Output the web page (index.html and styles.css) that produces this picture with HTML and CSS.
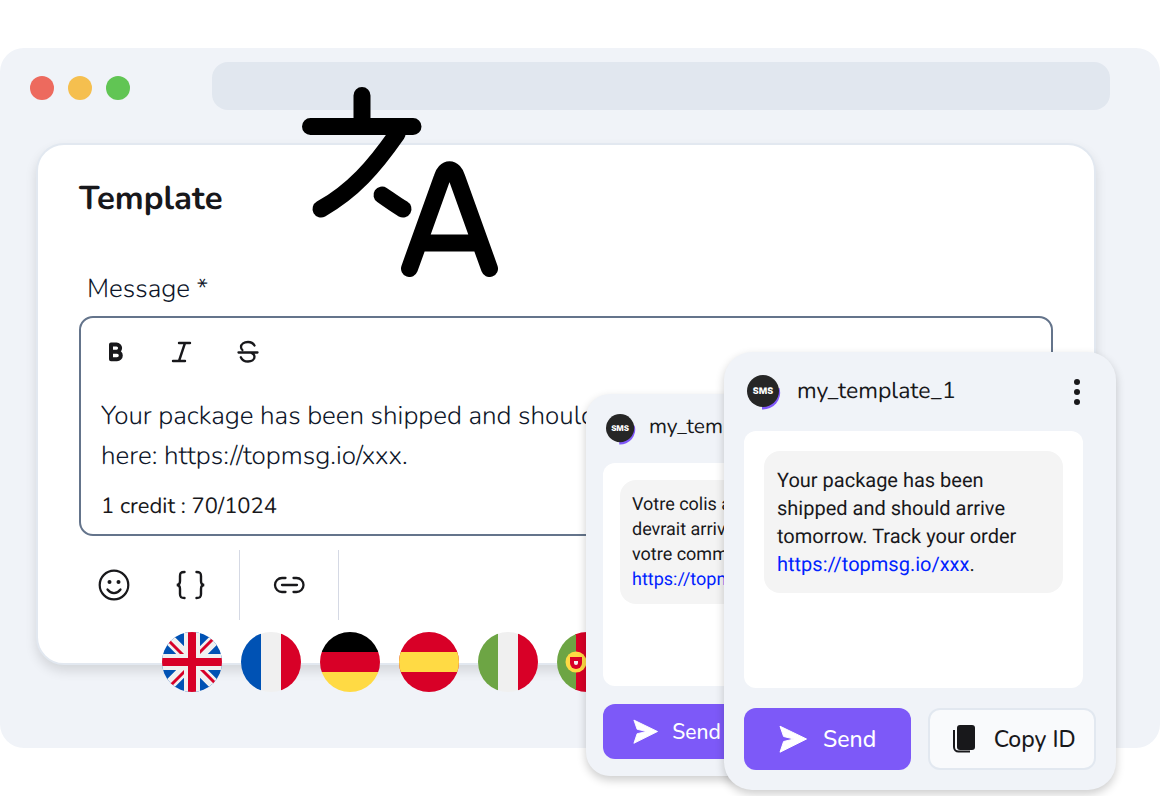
FILE: index.html
```html
<!DOCTYPE html>
<html lang="en">
<head>
<meta charset="UTF-8">
<meta name="viewport" content="width=device-width, initial-scale=1.0">
<title>Template</title>
<link rel="stylesheet" href="styles.css">
</head>
<body>

<main class="scene">
    <div class="window">
        <header class="window-bar">
            <span class="dot red"></span>
            <span class="dot yellow"></span>
            <span class="dot green"></span>
            <div class="address"></div>
        </header>

        <section class="panel">
            <h1>Template</h1>
            <label for="message">Message&nbsp;*</label>
            <div class="editor">
                <div class="format">
                    <button type="button" aria-label="Bold">
                        <svg viewBox="0 0 24 24" width="24" height="24"><path d="M7 4.500H12.500a3.400 3.400 0 0 1 0 7.200H7zM7 11.700h6a3.700 3.700 0 0 1 0 7.600H7z" fill="none" stroke="#18181b" stroke-width="4" stroke-linejoin="round"/></svg>
                    </button>
                    <button type="button" aria-label="Italic">
                        <svg viewBox="0 0 24 24" width="24" height="24"><path d="M9 3h11M3 21H15M15 3L9 21" fill="none" stroke="#18181b" stroke-width="2.400" stroke-linecap="round"/></svg>
                    </button>
                    <button type="button" aria-label="Strikethrough">
                        <svg viewBox="0 0 24 24" width="24" height="24"><path d="M18.500 5.500C17 2.800 14.500 2 12 2C8 2 5 4 5 7c0 1.300.5 2.200 1.400 3M2.500 12.500h19M15.500 13c2 .8 3 2 3 3.800 0 3-3 4.700-6.500 4.700-3.300 0-6-1.500-7.200-4.300" fill="none" stroke="#18181b" stroke-width="2.300" stroke-linecap="round"/></svg>
                    </button>
                </div>
                <textarea id="message" rows="2">Your package has been shipped and should arrive tomorrow. Track your order here: https://topmsg.io/xxx.</textarea>
                <p class="credits">1 credit : 70/1024</p>
            </div>
            <div class="tools">
                <button type="button" aria-label="Emoji">
                    <svg viewBox="0 0 32 32" width="32" height="32"><circle cx="16" cy="16" r="14.300" fill="none" stroke="#18181b" stroke-width="2.200"/><circle cx="11.500" cy="13" r="2" fill="#18181b"/><circle cx="20.500" cy="13" r="2" fill="#18181b"/><path d="M9.500 20.500c3.500 4.700 9.500 4.700 13 0" fill="none" stroke="#18181b" stroke-width="2.200" stroke-linecap="round"/></svg>
                </button>
                <button type="button" aria-label="Variable">
                    <svg viewBox="0 0 32 32" width="32" height="32"><path d="M10.500 3C6.500 3 6 4.500 6 7v5c0 2.500-1 4-3.300 4 2.300 0 3.300 1.500 3.300 4v5c0 2.500.5 4 4.500 4M22.500 3c4 0 4.500 1.500 4.500 4v5c0 2.500 1 4 3.300 4-2.300 0-3.300 1.500-3.300 4v5c0 2.500-.5 4-4.500 4" fill="none" stroke="#18181b" stroke-width="2.400" stroke-linecap="round"/></svg>
                </button>
                <span class="divider"></span>
                <button type="button" aria-label="Link">
                    <svg viewBox="0 0 32 32" width="32" height="32"><path d="M12.500 9H9a7 7 0 0 0 0 14H12.500M20.500 9h3a7 7 0 0 1 0 14H20.500M9 16h15" fill="none" stroke="#18181b" stroke-width="2.300" stroke-linecap="round"/></svg>
                </button>
                <span class="divider"></span>
            </div>
        </section>

        <div class="flags">
            <svg class="flag" viewBox="0 0 60 60" role="img" aria-label="English">
                <rect width="60" height="60" fill="#0052b4"/>
                <path d="M0 0L60 60M60 0L0 60" stroke="#f0f0f0" stroke-width="11"/>
                <path d="M5 7L23 25M55 53L37 35M53 5L36 22M7 55L24 38" stroke="#d80027" stroke-width="3"/>
                <path d="M30 0V60M0 30H60" stroke="#f0f0f0" stroke-width="16"/>
                <path d="M30 0V60M0 30H60" stroke="#d80027" stroke-width="8"/>
            </svg>
            <svg class="flag" viewBox="0 0 60 60" role="img" aria-label="French">
                <rect width="60" height="60" fill="#f0f0f0"/>
                <rect width="20" height="60" fill="#0052b4"/>
                <rect x="40" width="20" height="60" fill="#d80027"/>
            </svg>
            <svg class="flag" viewBox="0 0 60 60" role="img" aria-label="German">
                <rect width="60" height="20" fill="#000"/>
                <rect y="20" width="60" height="20" fill="#d80027"/>
                <rect y="40" width="60" height="20" fill="#ffda44"/>
            </svg>
            <svg class="flag" viewBox="0 0 60 60" role="img" aria-label="Spanish">
                <rect width="60" height="60" fill="#d80027"/>
                <rect y="20" width="60" height="20" fill="#ffda44"/>
            </svg>
            <svg class="flag" viewBox="0 0 60 60" role="img" aria-label="Italian">
                <rect width="60" height="60" fill="#f0f0f0"/>
                <rect width="20" height="60" fill="#6da544"/>
                <rect x="40" width="20" height="60" fill="#d80027"/>
            </svg>
            <svg class="flag" viewBox="0 0 60 60" role="img" aria-label="Portuguese">
                <rect x="18" width="42" height="60" fill="#d80027"/>
                <rect width="19" height="60" fill="#6da544"/>
                <circle cx="19" cy="30" r="10.500" fill="#ffda44"/>
                <path d="M13 25h12v6a6 6 0 0 1-12 0z" fill="#d80027"/>
                <path d="M17 29h4v2a2 2 0 0 1-4 0z" fill="#f0f0f0"/>
            </svg>
        </div>
    </div>

    <svg class="translate" viewBox="0 0 196 190" width="196" height="190" aria-hidden="true">
        <g fill="none" stroke="#000" stroke-width="17" stroke-linecap="round" stroke-linejoin="round">
            <path d="M60 8.500V39M8.500 39.500H111M95 47C72 80 51 104 19 122M80 108C86 112 94 118 101 122"/>
            <path d="M107.500 181.500L140 91C143 80 152 80 155 91L187.500 181.500M118 156H177"/>
        </g>
    </svg>

    <article class="card small">
        <div class="card-head">
            <svg class="sms" viewBox="0 0 34 36" aria-hidden="true"><path d="M15 18V35.500A17 17 0 0 0 32.500 14z" fill="#8059fa"/><circle cx="16" cy="17" r="16" fill="#262626"/><text x="16" y="20">SMS</text></svg>
            <h2>my_template_2</h2>
        </div>
        <div class="preview">
            <p class="bubble">Votre colis a été expédié et<br>devrait arriver demain. Suivez<br>votre commande ici :<br><a href="#">https://topmsg.io/xxx</a>.</p>
        </div>
        <div class="actions">
            <button type="button" class="send">
                <svg viewBox="0 0 28 28" aria-hidden="true"><path d="M1 1.200L27.500 14L1 27.200L4.600 16.500L15 14L4.600 11.500z" fill="#fff" stroke="#fff" stroke-linejoin="round"/></svg>
                Send
            </button>
        </div>
    </article>

    <article class="card">
        <div class="card-head">
            <svg class="sms" viewBox="0 0 34 36" aria-hidden="true"><path d="M15 18V35.500A17 17 0 0 0 32.500 14z" fill="#8059fa"/><circle cx="16" cy="17" r="16" fill="#262626"/><text x="16" y="20">SMS</text></svg>
            <h2>my_template_1</h2>
            <button type="button" class="more" aria-label="More">
                <svg viewBox="0 0 8 28" width="8" height="28"><circle cx="4" cy="4" r="3"/><circle cx="4" cy="14" r="3"/><circle cx="4" cy="24" r="3"/></svg>
            </button>
        </div>
        <div class="preview">
            <p class="bubble">Your package has been shipped and should arrive tomorrow. Track your order <a href="#">https://topmsg.io/xxx</a>.</p>
        </div>
        <div class="actions">
            <button type="button" class="send">
                <svg viewBox="0 0 28 28" aria-hidden="true"><path d="M1 1.200L27.500 14L1 27.200L4.600 16.500L15 14L4.600 11.500z" fill="#fff" stroke="#fff" stroke-linejoin="round"/></svg>
                Send
            </button>
            <button type="button" class="copy">
                <svg viewBox="0 0 24 28" aria-hidden="true"><rect x="5" y="0" width="18" height="25" rx="3" fill="#18181b"/><path d="M2 5V22a4.500 4.500 0 0 0 4.500 4.500H18" fill="none" stroke="#18181b" stroke-width="2"/></svg>
                Copy ID
            </button>
        </div>
    </article>
</main>

</body>
</html>
```
FILE: styles.css
```css
* {
    box-sizing: border-box;
}
body {
    margin: 0;
    background: #fff;
    color: #18181b;
    font-family: Nunito, Lato, sans-serif;
    text-rendering: geometricPrecision;
}
h1, h2, p {
    margin: 0;
}
button {
    padding: 0;
    border: 0;
    background: none;
    color: inherit;
    font: inherit;
    cursor: pointer;
}
svg {
    display: block;
}
.scene {
    position: relative;
    padding: 48px 0;
}
.window {
    padding: 14px 0 56px;
    border-radius: 24px;
    background: #f0f3f8;
}

/* browser bar */
.window-bar {
    display: flex;
    align-items: center;
    gap: 14px;
    padding: 0 50px 0 30px;
}
.dot {
    width: 24px;
    height: 24px;
    margin-top: 4px;
    border-radius: 50%;
}
.red {
    background: #ed6a5e;
}
.yellow {
    background: #f5bf4f;
}
.green {
    background: #61c554;
}
.address {
    flex: 1;
    height: 48px;
    margin-left: 68px;
    border-radius: 16px;
    background: #e1e7ef;
}

/* template form */
.panel {
    margin: 33px 64px 0 36px;
    padding: 34px 41px 43px;
    border: 2px solid #e2e8f0;
    border-radius: 28px;
    background: #fff;
    box-shadow: 0 6px 12px rgba(0, 0, 0, 0.12);
}
h1 {
    font-size: 33px;
    line-height: 40px;
}
label {
    display: block;
    margin: 53px 0 8px 8px;
    color: #0f172a;
    font-size: 26px;
    font-weight: 350;
    line-height: 36px;
}
.editor {
    padding: 22px 20px 10px;
    border: 2px solid #64748b;
    border-radius: 14px;
}
.format {
    display: flex;
    gap: 42px;
    padding-left: 3px;
}
.editor textarea {
    display: block;
    width: 100%;
    height: 80px;
    margin-top: 33px;
    padding: 0;
    border: 0;
    outline: 0;
    resize: none;
    overflow: hidden;
    background: none;
    color: #0f172a;
    font: 350 26px/40px Nunito, Lato, sans-serif;
    text-rendering: inherit;
}
.credits {
    margin-top: 11px;
    font-size: 22px;
    line-height: 36px;
}
.tools {
    display: flex;
    align-items: center;
    height: 70px;
    margin-top: 14px;
    padding-left: 19px;
    gap: 33px;
}
.tools button:nth-child(2) {
    margin-left: 11px;
}
.divider {
    width: 1px;
    height: 70px;
    background: #d5d9e4;
}

.flags {
    display: flex;
    gap: 19px;
    margin-top: -33px;
    padding-left: 162px;
    position: relative;
}
.flag {
    width: 60px;
    height: 60px;
    border-radius: 50%;
}
.translate {
    position: absolute;
    top: 87px;
    left: 302px;
}

/* floating message cards */
.card {
    position: absolute;
    top: 352px;
    right: 44px;
    width: 392px;
    padding: 20px;
    border-radius: 28px;
    background: #f0f3f8;
    box-shadow: 0 4px 10px rgba(0, 0, 0, 0.2);
}
.card-head {
    display: flex;
    align-items: center;
    height: 40px;
    padding: 0 15px 0 3px;
}
.sms {
    width: 34px;
    height: 36px;
}
.sms text {
    fill: #fff;
    font: 800 9px Inter, sans-serif;
    text-anchor: middle;
}
.card h2 {
    flex: 1;
    margin-left: 16px;
    padding-bottom: 2px;
    font-size: 23px;
    font-weight: 400;
}
.more {
    fill: #18181b;
}
.preview {
    height: 257px;
    margin: 19px 13px 20px 0;
    padding: 20px;
    border-radius: 12px;
    background: #fff;
}
.bubble {
    padding: 15px 13px;
    border-radius: 16px;
    background: #f4f4f4;
    font: 20px/28px Roboto, sans-serif;
}
.bubble a {
    color: #0022ff;
    text-decoration: none;
}
.actions {
    display: flex;
    gap: 17px;
}
.actions button {
    display: flex;
    flex: 1 1 50%;
    align-items: center;
    justify-content: center;
    gap: 16px;
    height: 62px;
    border-radius: 12px;
    font-size: 23px;
    font-weight: 500;
}
.actions svg {
    height: 28px;
}
.actions .send {
    background: #7d59f8;
    color: #fff;
}
.actions .copy {
    gap: 18px;
    padding-left: 3px;
    border: 2px solid #e2e8f0;
    background: #f9fafc;
}

.small {
    top: 394px;
    right: 221px;
    width: 353px;
    padding: 17px;
    border-radius: 24px;
}
.small .card-head {
    height: 36px;
}
.small .sms {
    width: 30px;
    height: 32px;
}
.small h2 {
    margin-left: 13px;
    padding-bottom: 4px;
    font-size: 21px;
}
.small .preview {
    height: 223px;
    margin: 16px 12px 18px 0;
    padding: 17px;
}
.small .bubble {
    padding: 12px;
    font-size: 18px;
    line-height: 25px;
}
.small .actions button {
    flex: none;
    width: 148px;
    height: 55px;
    gap: 14px;
    font-size: 21px;
}
.small .actions svg {
    height: 25px;
}
```
